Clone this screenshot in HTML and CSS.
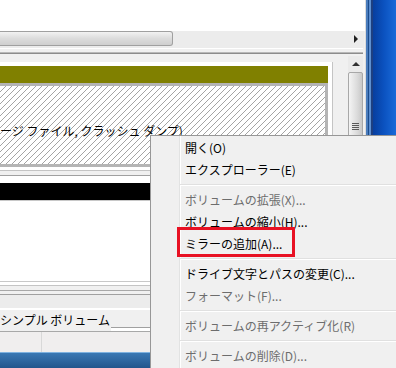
FILE: index.html
```html
<!DOCTYPE html>
<html lang="ja">
<head>
	<meta charset="UTF-8">
	<title>ディスクの管理</title>
	<link rel="stylesheet" href="styles.css">
</head>
<body>

<!-- 画面全体 -->
	<div class="screen">

		<div class="screen-top">

			<!-- ディスクの管理ウィンドウ -->
			<div class="window">

				<!-- 上のボリューム一覧（白い部分） -->
				<div class="list-pane"></div>

				<div class="hscroll">
					<div class="hscroll-thumb"></div>
					<div class="hscroll-track">
						<span class="arrow-right"></span>
					</div>
				</div>

				<div class="splitter"></div>

				<!-- グラフィカル表示 -->
				<div class="graph-pane">

					<div class="graph-content">

						<div class="disk-row disk-row-first">
							<div class="part">
								<div class="part-head part-head-simple"></div>
								<div class="part-body part-body-selected">
									<svg class="hatch" width="100%" height="100%">
										<defs>
											<pattern id="hatch" width="6" height="6" patternUnits="userSpaceOnUse">
												<path d="M-1 7L7 -1" stroke="#a4a4a4" stroke-width="1"/>
											</pattern>
										</defs>
										<rect width="100%" height="100%" fill="url(#hatch)"/>
									</svg>
									<span class="part-status">ージ ファイル, クラッシュ ダンプ)</span>
								</div>
							</div>
						</div>

						<div class="disk-row">
							<div class="part">
								<div class="part-head part-head-free"></div>
								<div class="part-body"></div>
							</div>
						</div>

					</div>

					<div class="vscroll">
						<div class="vscroll-up"><span class="arrow-up"></span></div>
						<div class="vscroll-thumb">
							<span class="grip"></span>
						</div>
					</div>

				</div>

				<!-- 凡例 -->
				<div class="legend">
					<span class="legend-label">シンプル ボリューム</span>
					<span class="legend-rest"></span>
				</div>

				<!-- ステータスバー -->
				<div class="statusbar">
					<div class="status-cell status-cell-first"></div>
					<div class="status-cell"></div>
				</div>

			</div>

			<!-- デスクトップの青 -->
			<div class="desktop"></div>

		</div>

		<div class="taskbar"></div>

	</div>


<!-- 右クリックメニュー（右端と下端は画面の外に続く） -->
	<div class="menu">
		<div class="menu-item">開く(O)</div>
		<div class="menu-item">エクスプローラー(E)</div>
		<div class="menu-sep"></div>
		<div class="menu-item disabled">ボリュームの拡張(X)...</div>
		<div class="menu-item">ボリュームの縮小(H)...</div>
		<div class="menu-item">ミラーの追加(A)...</div>
		<div class="menu-sep"></div>
		<div class="menu-item">ドライブ文字とパスの変更(C)...</div>
		<div class="menu-item disabled">フォーマット(F)...</div>
		<div class="menu-sep"></div>
		<div class="menu-item disabled">ボリュームの再アクティブ化(R)</div>
		<div class="menu-sep"></div>
		<div class="menu-item disabled">ボリュームの削除(D)...</div>

		<!-- 赤い枠（注目） -->
		<div class="mark"></div>
	</div>

</body>
</html>
```

FILE: styles.css
```css
body {
    margin: 0;
    width: 396px;
    height: 368px;
    overflow: hidden;
    position: relative;
    font-family: "Noto Sans CJK JP", sans-serif;
    font-size: 12px;
    color: #000000;
}

.screen {
    display: flex;
    flex-direction: column;
    height: 368px;
}

.screen-top {
    display: flex;
    height: 352px;
}

.window {
    width: 365px;
    display: flex;
    flex-direction: column;
    background: #f0f0f0;
}

.list-pane {
    height: 31px;
    background: #ffffff;
}

/* 横スクロールバー */
.hscroll {
    display: flex;
    height: 17px;
    margin-right: 1px;
    background: #ececec;
}

.hscroll-thumb {
    width: 172px;
    height: 13px;
    border: #a0a0a0 solid 1px;
    border-left: none;
    border-radius: 0 3px 3px 0;
    background: linear-gradient(#f2f2f2, #dcdcdc 50%, #cfcfcf);
}

.hscroll-track {
    flex: 1;
    display: flex;
    justify-content: flex-end;
    align-items: flex-start;
}

.arrow-right {
    width: 0;
    height: 0;
    margin: 4px 6px 0 0;
    border-left: 4px solid #202020;
    border-top: 4px solid transparent;
    border-bottom: 4px solid transparent;
}

.splitter {
    height: 4px;
    border-top: 1px solid #ffffff;
    border-bottom: 1px solid #8c8c8c;
    background: #f0f0f0;
    margin-right: 2px;
    box-shadow: 0 -1px 0 #b8b8b8 inset;
}

/* グラフィカル表示 */
.graph-pane {
    display: flex;
    height: 236px;
    border-right: 2px solid #f0f0f0;
}

.graph-content {
    flex: 1;
    padding-top: 8px;
}

.disk-row {
    width: 328px;
    padding: 4px 4px 3px 0;
    background: #ffffff;
    border-right: 1px solid #c4c4c4;
    border-bottom: 1px solid #c4c4c4;
}

.disk-row-first {
    margin-bottom: 4px;
}

.disk-row + .disk-row {
    border-top: 1px solid #a0a0a0;
    padding-top: 7px;
}

.part-head {
    height: 17px;
}

.part-head-simple {
    background: #808000;
}

.part-head-free {
    background: #000000;
}

.part-body {
    position: relative;
    height: 78px;
    border: 3px solid #b4b4b4;
    border-left: none;
    background: #ffffff;
}

.disk-row + .disk-row .part-body {
    height: 80px;
    border-width: 1px;
    border-color: #c8c8c8;
}

.hatch {
    display: block;
}

/* 斜線の上に重なる文字 */
.part-status {
    position: absolute;
    left: 0;
    top: 37px;
    line-height: 16px;
    white-space: nowrap;
}

/* 縦スクロールバー */
.vscroll {
    width: 15px;
    margin: 2px 0 0 15px;
    background: #eaeaea;
}

.vscroll-up {
    height: 16px;
    display: flex;
    justify-content: center;
    align-items: center;
}

.arrow-up {
    width: 0;
    height: 0;
    border-bottom: 4px solid #303030;
    border-left: 4px solid transparent;
    border-right: 4px solid transparent;
}

.vscroll-thumb {
    position: relative;
    height: 200px;
    border: 1px solid #a8a8a8;
    border-radius: 2px;
    background: linear-gradient(90deg, #f4f4f4, #dcdcdc 60%, #c8c8c8);
}

.grip {
    position: absolute;
    left: 3px;
    top: 50px;
    width: 7px;
    height: 7px;
    background: repeating-linear-gradient(#5a5a5a 0 1px, transparent 1px 2px);
}

/* 凡例 */
.legend {
    display: flex;
    align-items: flex-end;
    height: 36px;
    border-top: 1px solid #a0a0a0;
    border-bottom: 1px solid #a8a8a8;
    box-shadow: 0 -3px 0 #f0f0f0, 0 -4px 0 #a8a8a8;
    margin-top: 4px;
    background: linear-gradient(#ececec 13px, #ffffff 13px 15px, #f0f0f0 15px);
}

.legend-label {
    line-height: 16px;
    padding: 0 1px 3px 0;
}

.legend-rest {
    flex: 1;
    height: 3px;
    border-top: 1px solid #a0a0a0;
    background: #ffffff;
}

/* ステータスバー */
.statusbar {
    flex: 1;
    display: flex;
    background: #f0eeee;
}

.status-cell {
    flex: 1;
}

.status-cell-first {
    flex: none;
    width: 41px;
    border-right: 1px solid #d8d8d8;
}

.desktop {
    flex: 1;
    border-left: 1px solid #dcdcdc;
    background:
        linear-gradient(90deg, #4a7cbc 0 2px, #1c4c8c 2px 3px, #5d8fd0 3px 5px, #1e3f80 5px 7px, transparent 7px),
        linear-gradient(90deg, #04318a, #0b52c0 60%, #1a6ad8);
}

.taskbar {
    flex: 1;
    border-top: 1px solid #7fb2e0;
    background: linear-gradient(#3a78b4, #22558c);
}

/* 右クリックメニュー */
.menu {
    position: absolute;
    left: 150px;
    top: 135px;
    right: 0;
    bottom: 0;
    overflow: hidden;
    padding: 1px 0 0 2px;
    border: 1px solid #979797;
    border-right: none;
    border-bottom: none;
    background: #f0f0f0;
}

.menu::before {
    content: "";
    position: absolute;
    left: 28px;
    top: 0;
    bottom: 0;
    width: 1px;
    background: #e2e3e3;
    box-shadow: 1px 0 0 #ffffff;
}

.menu-item {
    height: 22px;
    line-height: 22px;
    padding-left: 32px;
    white-space: nowrap;
}

.menu-item.disabled {
    color: #6d6d6d;
}

.menu-sep {
    height: 8px;
    margin-left: 27px;
    position: relative;
}

.menu-sep::after {
    content: "";
    position: absolute;
    left: 0;
    right: 0;
    top: 3px;
    height: 1px;
    background: #e0e0e0;
    border-bottom: 1px solid #ffffff;
}

.mark {
    position: absolute;
    left: 26px;
    top: 91px;
    width: 112px;
    height: 24px;
    border: 3px solid #e81123;
}
```
